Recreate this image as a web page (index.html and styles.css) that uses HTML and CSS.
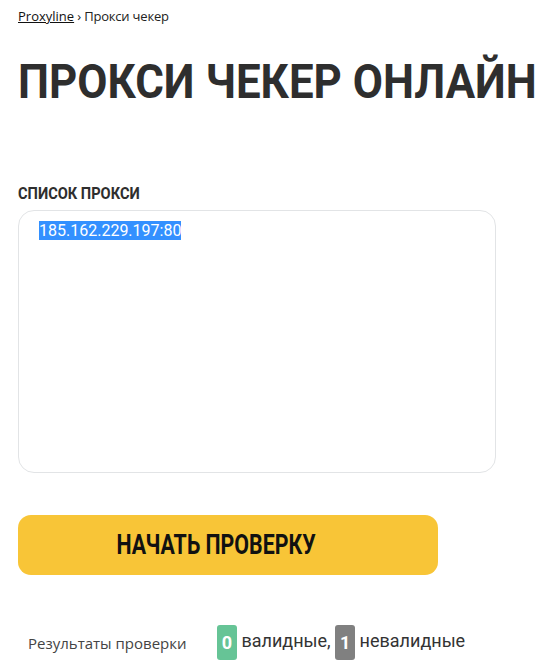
FILE: index.html
```html
<!DOCTYPE html>
<html lang="ru">
<head>
    <meta charset="UTF-8">
    <meta name="viewport" content="width=device-width, initial-scale=1.0">
    <title>Прокси чекер онлайн - Proxyline</title>
    <link rel="stylesheet" href="styles.css">
</head>
<body>
    <div class="page">
        <div class="breadcrumbs">
            <a href="#">Proxyline</a> › Прокси чекер
        </div>

        <h1 class="title"><span>ПРОКСИ ЧЕКЕР ОНЛАЙН</span></h1>

        <div class="label"><span>СПИСОК ПРОКСИ</span></div>
        <div class="proxy-list">
            <span class="selected">185.162.229.197:80</span>
        </div>

        <button class="start-btn"><span>НАЧАТЬ ПРОВЕРКУ</span></button>

        <div class="results">
            <span class="results-title">Результаты проверки</span>
            <span class="results-count">
                <span class="badge valid">0</span> валидные,
                <span class="badge invalid">1</span> невалидные
            </span>
        </div>
    </div>
</body>
</html>
```

FILE: styles.css
```css
body {
    margin: 0;
    background: #fff;
    font-family: "Open Sans", Arial, sans-serif;
    color: #333;
}
.page {
    padding: 6px 18px 0 18px;
    overflow: hidden;
}
.breadcrumbs {
    font-size: 13px;
    line-height: 20px;
    color: #222;
    letter-spacing: -0.2px;
}
.breadcrumbs a {
    color: #111;
    text-decoration: underline;
    letter-spacing: 0;
}
.title {
    margin: 26px 0 0 0;
    font-family: Roboto, sans-serif;
    font-weight: 700;
    font-size: 49px;
    line-height: 60px;
    color: #2e2e2e;
    white-space: nowrap;
}
.title span,
.label span,
.start-btn span {
    display: inline-block;
    transform: scaleX(0.86);
    transform-origin: left center;
}
.title span {
    transform: scaleX(0.895);
}
.label {
    margin-top: 71px;
    font-family: Roboto, sans-serif;
    font-weight: 700;
    font-size: 17px;
    line-height: 20px;
    color: #2e2e2e;
    white-space: nowrap;
}
.proxy-list {
    box-sizing: border-box;
    width: 478px;
    height: 263px;
    margin-top: 7px;
    padding: 11px 20px;
    border: 1px solid #e2e4e6;
    border-radius: 16px;
    font-family: Roboto, sans-serif;
    font-size: 16px;
    line-height: 17px;
}
.selected {
    background: #3390ff;
    color: #fff;
}
.start-btn {
    display: block;
    width: 420px;
    height: 60px;
    margin-top: 42px;
    padding: 0 24px 0 0;
    border: none;
    border-radius: 13px;
    background: #f8c537;
    font-family: Roboto, sans-serif;
    font-weight: 700;
    font-size: 27px;
    color: #111;
    white-space: nowrap;
    cursor: pointer;
}
.start-btn span {
    transform: scaleX(0.79);
    transform-origin: center center;
}
.results {
    display: flex;
    align-items: center;
    margin-top: 50px;
    padding-left: 10px;
}
.results-title {
    width: 189px;
    font-size: 15px;
    color: #444;
}
.results-count {
    font-family: Roboto, sans-serif;
    font-size: 18px;
    color: #333;
}
.badge {
    display: inline-block;
    width: 20px;
    height: 35px;
    line-height: 35px;
    border-radius: 3px;
    text-align: center;
    color: #fff;
    font-weight: 700;
    vertical-align: middle;
}
.valid { background: #66c496; }
.invalid { background: #808080; }
```
